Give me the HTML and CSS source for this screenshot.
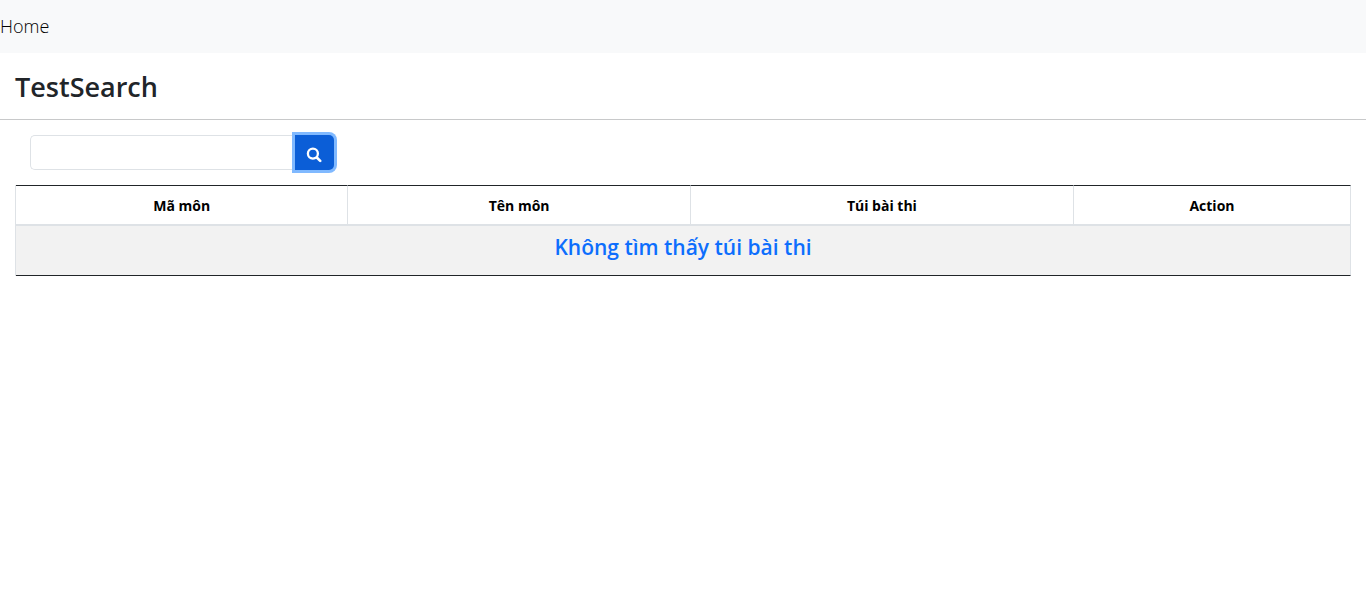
FILE: index.html
```html
<!DOCTYPE html>
<html lang="vi">
<head>
<meta charset="utf-8">
<meta name="viewport" content="width=device-width, initial-scale=1">
<title>TestSearch</title>
<link rel="stylesheet" href="styles.css">
</head>
<body>
<nav class="navbar"><a class="nav-link" href="#">Home</a></nav>
<header class="page-header"><h1 class="page-title">TestSearch</h1></header>
<main class="content">
  <form class="search" role="search">
    <input class="search-input" type="text" aria-label="Search">
    <button class="search-button" type="button" aria-label="Search">
      <svg class="search-icon" viewBox="0 0 16 16" aria-hidden="true"><circle cx="6.9" cy="6.6" r="5" fill="none" stroke="currentColor" stroke-width="2.3"/><path d="M10.8 10.5 14.2 13.9" fill="none" stroke="currentColor" stroke-width="2.6" stroke-linecap="round"/></svg>
    </button>
  </form>
  <table class="results">
    <colgroup><col class="col-code"><col class="col-name"><col class="col-bag"><col class="col-action"></colgroup>
    <thead>
      <tr><th>Mã môn</th><th>Tên môn</th><th>Túi bài thi</th><th>Action</th></tr>
    </thead>
    <tbody>
      <tr><td colspan="4"><h2 class="empty">Không tìm thấy túi bài thi</h2></td></tr>
    </tbody>
  </table>
</main>
</body>
</html>
```
FILE: styles.css
```css
* { box-sizing: border-box; }
body {
  margin: 0;
  background: #fff;
  color: #212529;
  font-family: "Segoe UI", "Open Sans", "Noto Sans", sans-serif;
  font-size: 14px;
  line-height: 21px;
}
.navbar {
  padding: 13px 0;
  background: #f8f9fa;
}
.nav-link {
  display: block;
  color: #000;
  font-size: 18px;
  font-weight: 300;
  line-height: 27px;
  text-decoration: none;
}
.page-header {
  padding: 16px 15px 14px;
  border-bottom: 1px solid #c8c9ca;
}
.page-title {
  margin: 0;
  font-size: 27px;
  font-weight: 600;
  line-height: 36px;
}
.content { padding: 15px; }
.search {
  display: flex;
  width: 304px;
  height: 35px;
  margin: 0 15px 15px;
}
.search-input {
  flex: 1;
  min-width: 0;
  padding: 6px 12px;
  border: 1px solid #dee2e6;
  border-right: 0;
  border-radius: 5px 0 0 5px;
  font: inherit;
}
.search-button {
  display: flex;
  align-items: center;
  justify-content: center;
  width: 39px;
  padding: 4px 1px 0 0;
  border: 0;
  border-radius: 0 5px 5px 0;
  background: #0b5ed7;
  color: #fff;
  box-shadow: 0 0 0 3px #80b9ff;
}
.search-icon {
  width: 16px;
  height: 16px;
}
.results {
  width: 100%;
  table-layout: fixed;
  border-collapse: separate;
  border-spacing: 0;
  border-left: 1px solid #dee2e6;
}
.col-code { width: 24.9%; }
.col-name { width: 25.65%; }
.col-bag { width: 28.7%; }
.col-action { width: 20.75%; }
.results th {
  padding: 9px 8px 8px;
  border-top: 1px solid #212529;
  border-right: 1px solid #dee2e6;
  border-bottom: 2px solid #dee2e6;
  color: #000;
  font-weight: 700;
}
.results td {
  padding: 8px 8px 14px;
  border-right: 1px solid #dee2e6;
  border-bottom: 1px solid #212529;
  background: #f2f2f2;
  text-align: center;
}
.empty {
  margin: 0;
  color: #0d6efd;
  font-size: 21px;
  font-weight: 600;
  line-height: 27px;
}
```
